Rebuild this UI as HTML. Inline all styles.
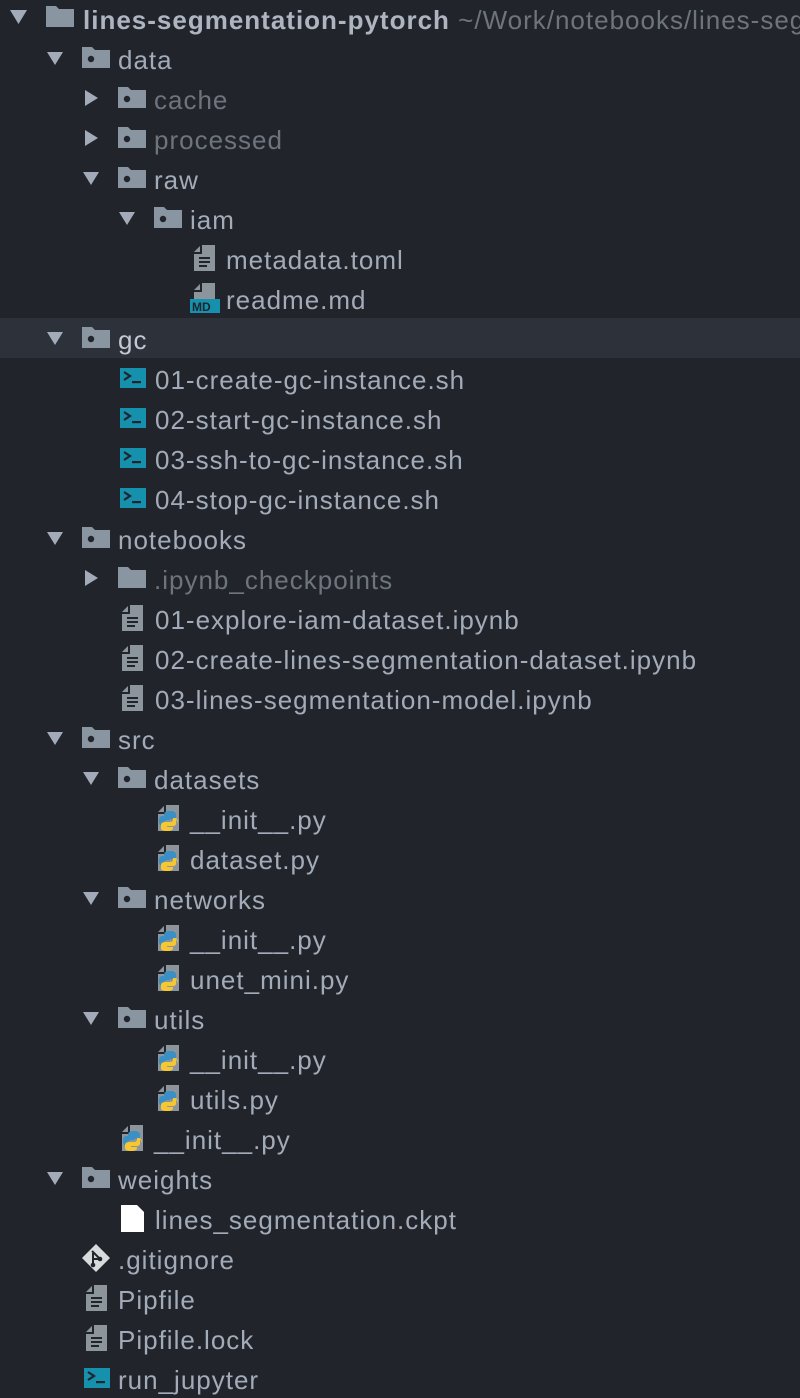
<!DOCTYPE html>
<html><head><meta charset="utf-8"><style>
body{margin:0;width:800px;height:1398px;background:#21252b;overflow:hidden;font-family:"Liberation Sans",sans-serif;position:relative}
.r{position:absolute;left:0;width:800px;height:40px;overflow:hidden}
.t{position:absolute;top:2px;line-height:40px;font-size:26px;letter-spacing:1px;color:#a3abb8;white-space:nowrap}
.g{color:#6e747e}
svg{position:absolute}
.sel{background:#2c313a}
</style></head><body>
<svg width="0" height="0" style="position:absolute">
<defs>
<g id="fd"><path d="M0 0h10l3 3h15v18h-28z" fill="#8995a0"/><circle cx="9" cy="12" r="3.2" fill="#21252b"/></g>
<g id="fp"><path d="M0 0h10l3 3h15v18h-28z" fill="#8995a0"/></g>
<g id="fl"><path d="M8 0h13v26h-21v-17h8z" fill="#8d959c"/><path d="M6 1v6h-6z" fill="#8d959c"/><rect x="5" y="12" width="11" height="2" fill="#21252b"/><rect x="5" y="16" width="11" height="2" fill="#21252b"/><rect x="5" y="20" width="8" height="2" fill="#21252b"/></g>
<g id="tm"><rect x="0" y="0" width="26" height="20" fill="#1591ae"/><path d="M4 4l6 4l-6 4" stroke="#21252b" stroke-width="2.2" fill="none"/><rect x="12" y="13" width="9" height="2.2" fill="#21252b"/></g>
<g id="py"><path d="M8 0h13v26h-21v-17h8z" fill="#8d959c"/><path d="M6 1v6h-6z" fill="#8d959c"/><path d="M6 10c0-3 2-4 6-4s6 1 6 4v4h-6v1h6h-8c-2 0-4 1-4 3v3h-2c-2 0-3-2-3-5s1-5 3-5h2z" fill="#3a8fc4"/><path d="M18 14v4c0 2-1 3-3 3h-6v1h6v1c0 2-2 3-6 3s-6-1-6-3v-3c0-2 2-3 4-3h5c2 0 3-1 3-3v-1h2c2 0 3 2 3 5" fill="#f5c732"/></g>
</defs></svg>

<div class="r" style="top:-2px">
<svg style="left:10px;top:12px" width="17" height="14"><path d="M0 0h17l-8.5 14z" fill="#a3abb8"/></svg>
<svg style="left:46px;top:8px" width="28" height="21"><path d="M0 0h10l3 3h15v18h-28z" fill="#8995a0"/></svg>
<div class="t" style="left:83px;font-weight:bold;color:#aeb5c1">lines-segmentation-pytorch <span style="font-weight:normal;color:#6e747e">~/Work/notebooks/lines-segmentation</span></div></div>

<div class="r" style="top:38px"><svg style="left:47px;top:14px" width="16" height="13"><path d="M0 0h16l-8 13z" fill="#a3abb8"/></svg><svg style="left:82px;top:9px" width="28" height="21"><use href="#fd"/></svg><div class="t" style="left:118px">data</div></div>
<div class="r" style="top:78px"><svg style="left:85px;top:12px" width="13" height="16"><path d="M0 0v16l13-8z" fill="#a3abb8"/></svg><svg style="left:118px;top:9px" width="28" height="21"><use href="#fd"/></svg><div class="t g" style="left:154px">cache</div></div>
<div class="r" style="top:118px"><svg style="left:85px;top:12px" width="13" height="16"><path d="M0 0v16l13-8z" fill="#a3abb8"/></svg><svg style="left:118px;top:9px" width="28" height="21"><use href="#fd"/></svg><div class="t g" style="left:154px">processed</div></div>
<div class="r" style="top:158px"><svg style="left:83px;top:14px" width="16" height="13"><path d="M0 0h16l-8 13z" fill="#a3abb8"/></svg><svg style="left:118px;top:9px" width="28" height="21"><use href="#fd"/></svg><div class="t" style="left:154px">raw</div></div>
<div class="r" style="top:198px"><svg style="left:119px;top:14px" width="16" height="13"><path d="M0 0h16l-8 13z" fill="#a3abb8"/></svg><svg style="left:154px;top:9px" width="28" height="21"><use href="#fd"/></svg><div class="t" style="left:190px">iam</div></div>
<div class="r" style="top:238px"><svg style="left:194px;top:7px" width="21" height="26"><use href="#fl"/></svg><div class="t" style="left:226px">metadata.toml</div></div>
<div class="r" style="top:278px"><svg style="left:194px;top:5px" width="21" height="20"><path d="M8 0h13v20h-21v-11h8z" fill="#8d959c"/><path d="M6 1v6h-6z" fill="#8d959c"/></svg><svg style="left:190px;top:21px" width="30" height="14"><rect width="30" height="14" fill="#1591ae"/><text x="2" y="12" font-family="Liberation Sans" font-weight="bold" font-size="12" fill="#21252b">MD</text></svg><div class="t" style="left:226px">readme.md</div></div>

<div class="r sel" style="top:318px"><svg style="left:47px;top:14px" width="16" height="13"><path d="M0 0h16l-8 13z" fill="#a3abb8"/></svg><svg style="left:82px;top:9px" width="28" height="21"><use href="#fd"/></svg><div class="t" style="left:118px;color:#c3c9d3">gc</div></div>
<div class="r" style="top:358px"><svg style="left:120px;top:10px" width="26" height="20"><use href="#tm"/></svg><div class="t" style="left:155px">01-create-gc-instance.sh</div></div>
<div class="r" style="top:398px"><svg style="left:120px;top:10px" width="26" height="20"><use href="#tm"/></svg><div class="t" style="left:155px">02-start-gc-instance.sh</div></div>
<div class="r" style="top:438px"><svg style="left:120px;top:10px" width="26" height="20"><use href="#tm"/></svg><div class="t" style="left:155px">03-ssh-to-gc-instance.sh</div></div>
<div class="r" style="top:478px"><svg style="left:120px;top:10px" width="26" height="20"><use href="#tm"/></svg><div class="t" style="left:155px">04-stop-gc-instance.sh</div></div>

<div class="r" style="top:518px"><svg style="left:47px;top:14px" width="16" height="13"><path d="M0 0h16l-8 13z" fill="#a3abb8"/></svg><svg style="left:82px;top:9px" width="28" height="21"><use href="#fd"/></svg><div class="t" style="left:118px">notebooks</div></div>
<div class="r" style="top:558px"><svg style="left:85px;top:12px" width="13" height="16"><path d="M0 0v16l13-8z" fill="#a3abb8"/></svg><svg style="left:118px;top:9px" width="28" height="21"><use href="#fp"/></svg><div class="t g" style="left:154px">.ipynb_checkpoints</div></div>
<div class="r" style="top:598px"><svg style="left:122px;top:7px" width="21" height="26"><use href="#fl"/></svg><div class="t" style="left:155px">01-explore-iam-dataset.ipynb</div></div>
<div class="r" style="top:638px"><svg style="left:122px;top:7px" width="21" height="26"><use href="#fl"/></svg><div class="t" style="left:155px">02-create-lines-segmentation-dataset.ipynb</div></div>
<div class="r" style="top:678px"><svg style="left:122px;top:7px" width="21" height="26"><use href="#fl"/></svg><div class="t" style="left:155px">03-lines-segmentation-model.ipynb</div></div>

<div class="r" style="top:718px"><svg style="left:47px;top:14px" width="16" height="13"><path d="M0 0h16l-8 13z" fill="#a3abb8"/></svg><svg style="left:82px;top:9px" width="28" height="21"><use href="#fd"/></svg><div class="t" style="left:118px">src</div></div>
<div class="r" style="top:758px"><svg style="left:83px;top:14px" width="16" height="13"><path d="M0 0h16l-8 13z" fill="#a3abb8"/></svg><svg style="left:118px;top:9px" width="28" height="21"><use href="#fd"/></svg><div class="t" style="left:154px">datasets</div></div>
<div class="r" style="top:798px"><svg style="left:158px;top:7px" width="27" height="29"><use href="#py"/></svg><div class="t" style="left:190px">__init__.py</div></div>
<div class="r" style="top:838px"><svg style="left:158px;top:7px" width="27" height="29"><use href="#py"/></svg><div class="t" style="left:190px">dataset.py</div></div>
<div class="r" style="top:878px"><svg style="left:83px;top:14px" width="16" height="13"><path d="M0 0h16l-8 13z" fill="#a3abb8"/></svg><svg style="left:118px;top:9px" width="28" height="21"><use href="#fd"/></svg><div class="t" style="left:154px">networks</div></div>
<div class="r" style="top:918px"><svg style="left:158px;top:7px" width="27" height="29"><use href="#py"/></svg><div class="t" style="left:190px">__init__.py</div></div>
<div class="r" style="top:958px"><svg style="left:158px;top:7px" width="27" height="29"><use href="#py"/></svg><div class="t" style="left:190px">unet_mini.py</div></div>
<div class="r" style="top:998px"><svg style="left:83px;top:14px" width="16" height="13"><path d="M0 0h16l-8 13z" fill="#a3abb8"/></svg><svg style="left:118px;top:9px" width="28" height="21"><use href="#fd"/></svg><div class="t" style="left:154px">utils</div></div>
<div class="r" style="top:1038px"><svg style="left:158px;top:7px" width="27" height="29"><use href="#py"/></svg><div class="t" style="left:190px">__init__.py</div></div>
<div class="r" style="top:1078px"><svg style="left:158px;top:7px" width="27" height="29"><use href="#py"/></svg><div class="t" style="left:190px">utils.py</div></div>
<div class="r" style="top:1118px"><svg style="left:122px;top:7px" width="27" height="29"><use href="#py"/></svg><div class="t" style="left:154px">__init__.py</div></div>

<div class="r" style="top:1158px"><svg style="left:47px;top:14px" width="16" height="13"><path d="M0 0h16l-8 13z" fill="#a3abb8"/></svg><svg style="left:82px;top:9px" width="28" height="21"><use href="#fd"/></svg><div class="t" style="left:118px">weights</div></div>
<div class="r" style="top:1198px"><svg style="left:121px;top:7px" width="23" height="27"><path d="M0 0h16l7 7v20h-23z" fill="#ffffff"/></svg><div class="t" style="left:155px">lines_segmentation.ckpt</div></div>
<div class="r" style="top:1238px"><svg style="left:82px;top:6px" width="28" height="28"><path d="M14 0l14 14l-14 14l-14-14z" fill="#d8dadc"/><path d="M10 7l8 8M11 9v12M11 15l6 0" stroke="#21252b" stroke-width="2" fill="none"/><circle cx="11" cy="21" r="2.3" fill="#21252b"/><circle cx="18" cy="15" r="2.3" fill="#21252b"/></svg><div class="t" style="left:118px">.gitignore</div></div>
<div class="r" style="top:1278px"><svg style="left:86px;top:7px" width="21" height="26"><use href="#fl"/></svg><div class="t" style="left:118px">Pipfile</div></div>
<div class="r" style="top:1318px"><svg style="left:86px;top:7px" width="21" height="26"><use href="#fl"/></svg><div class="t" style="left:118px">Pipfile.lock</div></div>
<div class="r" style="top:1358px"><svg style="left:84px;top:10px" width="26" height="20"><use href="#tm"/></svg><div class="t" style="left:118px">run_jupyter</div></div>
</body></html>
